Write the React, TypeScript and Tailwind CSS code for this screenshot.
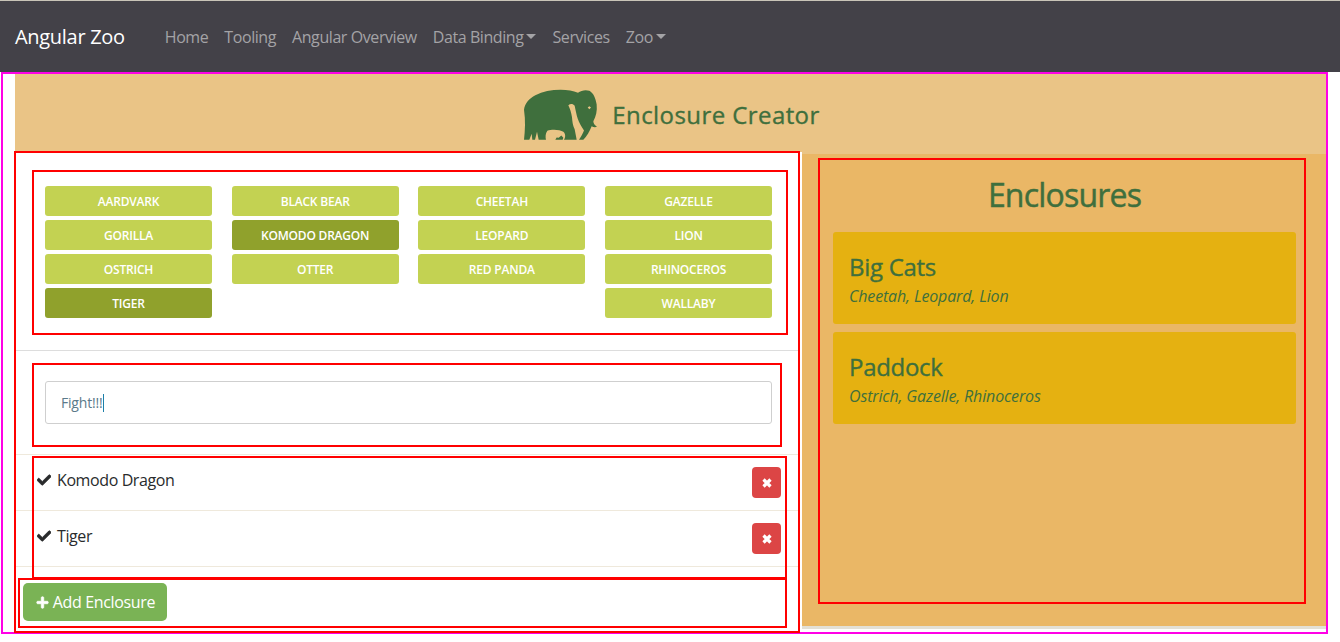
import { FaCheck, FaPlus } from 'react-icons/fa'

const animalColumns = [
  [
    { name: 'Aardvark' },
    { name: 'Gorilla' },
    { name: 'Ostrich' },
    { name: 'Tiger', active: true },
  ],
  [
    { name: 'Black Bear' },
    { name: 'Komodo Dragon', active: true },
    { name: 'Otter' },
  ],
  [{ name: 'Cheetah' }, { name: 'Leopard' }, { name: 'Red Panda' }],
  [
    { name: 'Gazelle' },
    { name: 'Lion' },
    { name: 'Rhinoceros' },
    { name: 'Wallaby' },
  ],
]

const navLinks = [
  { label: 'Home' },
  { label: 'Tooling' },
  { label: 'Angular Overview' },
  { label: 'Data Binding', caret: true },
  { label: 'Services' },
  { label: 'Zoo', caret: true },
]

const selected = ['Komodo Dragon', 'Tiger']

const enclosures = [
  { title: 'Big Cats', animals: 'Cheetah, Leopard, Lion' },
  { title: 'Paddock', animals: 'Ostrich, Gazelle, Rhinoceros' },
]

// debug outlines that sit on top of the page in the screenshot
const redBoxes = [
  'left-[14px] top-[151px] w-[786px] h-[482px]',
  'left-[32px] top-[170px] w-[756px] h-[165px]',
  'left-[32px] top-[363px] w-[750px] h-[84px]',
  'left-[32px] top-[456px] w-[755px] h-[123px]',
  'left-[18px] top-[578px] w-[769px] h-[50px]',
  'left-[818px] top-[158px] w-[488px] h-[446px]',
]

function Elephant() {
  return (
    <svg viewBox="30 27 222 153" className="h-[52px] w-[74px] shrink-0" aria-hidden="true">
      <path
        fill="#3f6f3d"
        fillRule="evenodd"
        d="M30 178 C33 150 35 120 30 88 C32 68 46 54 64 44 C86 33 112 28 140 28 C160 28 178 31 192 37 C202 29 216 27 226 31 C238 37 245 54 248 72 C250 92 246 108 238 122 C238 128 242 134 249 139 C243 141 238 140 233 137 C227 152 218 168 208 178 L195 178 C200 170 206 160 210 150 C202 138 195 126 191 114 C187 102 185 90 182 76 C177 69 169 69 163 74 C168 84 172 96 174 110 C175 122 176 134 182 146 L188 178 L150 178 C155 170 155 160 148 154 C138 147 112 146 100 151 C94 160 94 170 96 178 L74 178 L69 154 L63 178 L55 178 L53 160 L46 178 Z M221 81 L226 86 L231 81 L226 77 Z"
      />
      <path fill="#3f6f3d" d="M124 178 L128 171 L134 172 L142 165 L148 172 L146 178 Z" />
    </svg>
  )
}

export default function App() {
  return (
    <div className="relative min-h-[642px] w-[1340px] overflow-hidden bg-white font-['Open_Sans',sans-serif]">
      <nav className="flex h-[72px] items-center border-t border-[#c9c4b8] bg-[#434148] pl-[15px]">
        <a className="mr-[40px] text-[20px] leading-none text-white tracking-[-0.3px]">Angular Zoo</a>
        <div className="flex gap-[16px] text-[16px] leading-6 tracking-[-0.42px] text-[#a4a3a6]">
          {navLinks.map((link) => (
            <a key={link.label} className="flex items-center">
              {link.label}
              {link.caret && (
                <span className="ml-[3px] mt-[-1px] h-0 w-0 border-x-[5px] border-t-[5px] border-x-transparent border-t-[#a4a3a6]" />
              )}
            </a>
          ))}
        </div>
      </nav>

      <main className="ml-[15px] mr-[14px]">
        <header className="flex h-[80px] items-center justify-center gap-[14px] bg-[#eac486] pl-[3px] pt-[6px]">
          <Elephant />
          <h1 className="text-[24px] tracking-[0.42px] text-[#3f6f3d] [-webkit-text-stroke:0.35px_#3f6f3d]">Enclosure Creator</h1>
        </header>

        <div className="flex h-[480px] gap-[2px]">
          <section className="w-[785px] shrink-0">
            <div className="grid grid-cols-4 gap-x-[19.67px] pl-[30px] pr-[28px] pt-[34px]">
              {animalColumns.map((column, i) => (
                <div key={i} className="flex flex-col gap-[4px]">
                  {column.map((animal) => (
                    <button
                      key={animal.name}
                      className={`h-[30px] rounded-[3px] pt-[1px] text-[12px] font-semibold uppercase tracking-[-0.2px] text-white ${
                        animal.active ? 'bg-[#90a12c]' : 'bg-[#c3d252]'
                      }`}
                    >
                      {animal.name}
                    </button>
                  ))}
                </div>
              ))}
            </div>

            <hr className="mt-[32px] border-t border-[#dddddd]" />

            <div className="px-[30px] pb-[30px] pr-[28px] pt-[30px]">
              <div className="flex h-[43px] items-center rounded-[3px] border border-[#cfcfcf] pl-[15px] text-[14px] tracking-[-0.2px] text-[#5b7a8a]">
                Fight!!!
                <span className="ml-[1px] h-[18px] w-px bg-[#1d7fa8]" />
              </div>
            </div>

            <ul className="border-t border-[#efe9dc]">
              {selected.map((name) => (
                <li key={name} className="flex h-[56px] items-start justify-between border-b border-[#efe9dc] pl-[22px] pr-[19px]">
                  <span className="flex items-center pt-[13px] text-[16px] leading-6 tracking-[-0.4px] text-[#292b2c]">
                    <FaCheck className="mr-[6px] h-[14px] w-[14px]" stroke="currentColor" strokeWidth={30} />
                    {name}
                  </span>
                  <button className="mt-[12px] flex h-[31px] w-[29px] items-center justify-center rounded-[4px] bg-[#dc4545] text-white">
                    <svg viewBox="0 0 10 10" className="h-[10px] w-[10px]" aria-hidden="true">
                      <path d="M1.5 1.5 L8.5 8.5 M8.5 1.5 L1.5 8.5" stroke="currentColor" strokeWidth="3.2" />
                    </svg>
                  </button>
                </li>
              ))}
            </ul>

            <div className="pl-[8px] pt-[16px]">
              <button className="flex h-[38px] w-[144px] items-center justify-center rounded-[5px] bg-[#7ab355] pl-[1px] text-[16px] tracking-[-0.35px] text-white">
                <FaPlus className="mr-[4px] h-[13px] w-[13px]" stroke="currentColor" strokeWidth={30} />
                Add Enclosure
              </button>
            </div>
          </section>

          <aside className="h-[477px] flex-1 border-b-[3px] border-t-2 border-b-[#e3e0d6] border-t-[#eac486] bg-[#eab766] pl-[31px] pr-[30px] pt-[17px]">
            <h2 className="text-center text-[32px] leading-[48px] tracking-[-0.8px] text-[#3f6f3d] [-webkit-text-stroke:0.45px_#3f6f3d]">Enclosures</h2>
            <div className="mt-[13px] flex flex-col gap-[8px]">
              {enclosures.map((enclosure) => (
                <div key={enclosure.title} className="flex h-[92px] flex-col rounded-[3px] bg-[#e5b111] pl-[16px] pt-[18px] text-[#3f6f3d]">
                  <h3 className="text-[24px] leading-[34px] tracking-[-0.3px] [-webkit-text-stroke:0.35px_#3f6f3d]">{enclosure.title}</h3>
                  <p className="text-[16px] italic leading-[24px] tracking-[-0.15px]">{enclosure.animals}</p>
                </div>
              ))}
            </div>
          </aside>
        </div>
      </main>

      <div className="pointer-events-none absolute left-[1px] top-[72px] h-[562px] w-[1327px] border-2 border-[#ff00e6]" />
      {redBoxes.map((box) => (
        <div key={box} className={`pointer-events-none absolute border-2 border-[#ff0000] ${box}`} />
      ))}
    </div>
  )
}
